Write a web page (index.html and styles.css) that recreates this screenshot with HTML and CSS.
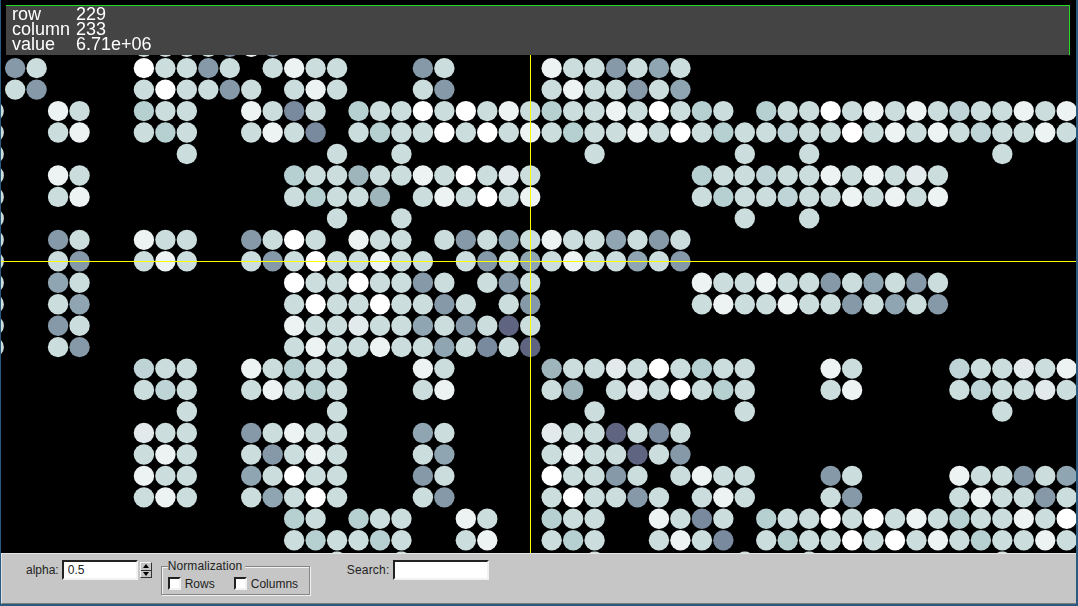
FILE: index.html
```html
<!DOCTYPE html>
<html lang="en">
<head>
    <meta charset="UTF-8">
    <meta name="viewport" content="width=device-width, initial-scale=1.0">
    <title>Matrix Viewer</title>
    <link rel="stylesheet" href="styles.css">
</head>
<body>
    <div class="window">
        <div class="view">
            <canvas id="matrix" width="1075" height="553"></canvas>
            <div class="cross-v"></div>
            <div class="cross-h"></div>
            <div class="info">
                <span>row</span><span>229</span>
                <span>column</span><span>233</span>
                <span>value</span><span>6.71e+06</span>
            </div>
        </div>
        <div class="panel">
            <label class="field-label alpha-label" for="alpha">alpha:</label>
            <input class="entry alpha-entry" type="text" id="alpha" value="0.5">
            <div class="spin">
                <button class="spin-btn"><span class="arrow-up"></span></button>
                <button class="spin-btn"><span class="arrow-down"></span></button>
            </div>
            <fieldset class="group">
                <legend>Normalization</legend>
                <label class="check check-rows"><input type="checkbox">Rows</label>
                <label class="check"><input type="checkbox">Columns</label>
            </fieldset>
            <label class="field-label search-label" for="search">Search:</label>
            <input class="entry search-entry" type="text" id="search">
        </div>
    </div>
    <script src="app.js"></script>
</body>
</html>
```

FILE: styles.css
```css
body {
    margin: 0;
    background-color: #2b5a80;
    font-family: "Liberation Sans", Arial, sans-serif;
}
.window {
    width: 1075px;
    height: 604px;
    margin-left: 1px;
    display: flex;
    flex-direction: column;
    overflow: hidden;
}
.view {
    position: relative;
    height: 553px;
    background-color: #000;
}
#matrix {
    display: block;
}
.cross-v {
    position: absolute;
    left: 529px;
    top: 55px;
    bottom: 0;
    width: 1px;
    background-color: #ffff00;
}
.cross-h {
    position: absolute;
    left: 0;
    right: 0;
    top: 261px;
    height: 1px;
    background-color: #ffff00;
}
.info {
    position: absolute;
    left: 5px;
    top: 5px;
    width: 1057px;
    height: 48px;
    padding: 1px 0 0 6px;
    display: grid;
    grid-template-columns: 64px 1fr;
    grid-auto-rows: 15px;
    background-color: #444;
    border-top: 1px solid #22dd22;
    border-right: 1px solid #22dd22;
    color: #fff;
    font-size: 18px;
    line-height: 15px;
}
.panel {
    flex: 1;
    display: flex;
    align-items: flex-start;
    padding: 6px 0 0 24px;
    background-color: #c6c6c6;
    border-top: 1px solid #e4e4e4;
    border-left: 1px solid #e4e4e4;
    border-bottom: 1px solid #7d7d7d;
    font-size: 12px;
    color: #222;
}
.field-label {
    line-height: 20px;
    margin-right: 3px;
}
.entry {
    height: 20px;
    padding: 0 0 0 4px;
    box-sizing: border-box;
    margin: 0;
    background-color: #fff;
    border: 2px solid;
    border-color: #222 #f2f2f2 #f2f2f2 #222;
    outline: none;
    font-family: "Liberation Sans", Arial, sans-serif;
    font-size: 12px;
    color: #222;
}
.alpha-entry {
    width: 76px;
}
.search-entry {
    width: 96px;
}
.search-label {
    margin-left: 37px;
    margin-right: 4px;
    letter-spacing: 0.2px;
}
.spin {
    width: 12px;
    height: 16px;
    box-sizing: border-box;
    margin: 2px 0 0 2px;
    display: flex;
    flex-direction: column;
    background-color: #c6c6c6;
    border: 1px solid;
    border-color: #f2f2f2 #333 #333 #f2f2f2;
}
.spin-btn {
    flex: 1;
    padding: 0;
    display: flex;
    align-items: center;
    justify-content: center;
    background: none;
    border: none;
}
.spin-btn:first-child {
    border-bottom: 1px solid #333;
}
.arrow-up {
    border-left: 3px solid transparent;
    border-right: 3px solid transparent;
    border-bottom: 4px solid #000;
}
.arrow-down {
    border-left: 3px solid transparent;
    border-right: 3px solid transparent;
    border-top: 4px solid #000;
}
.group {
    width: 149px;
    height: 35px;
    box-sizing: border-box;
    margin: 0 0 0 9px;
    padding: 0 0 0 6px;
    display: flex;
    align-items: center;
    border: 1px solid #858585;
    box-shadow: 1px 1px 0 #f2f2f2, inset 1px 1px 0 #f2f2f2;
}
.group legend {
    padding: 0 3px 0 0;
    line-height: 13px;
    letter-spacing: 0.1px;
    background-color: #c6c6c6;
}
.check {
    display: flex;
    align-items: center;
    line-height: 14px;
}
.check-rows {
    margin-right: 19px;
}
.check input {
    appearance: none;
    width: 13px;
    height: 13px;
    margin: 0 4px 0 0;
    box-sizing: border-box;
    background-color: #fff;
    border: 2px solid;
    border-color: #222 #f2f2f2 #f2f2f2 #222;
}
```

FILE: app.js
```js
// colour levels of the matrix cells
const colours = {
    w: '#ffffff',
    e: '#edf3f3',
    f: '#e2eaec',
    l: '#ccdddd',
    g: '#bfd4d7',
    b: '#b6cfd0',
    h: '#9db5bb',
    n: '#8fa6b2',
    m: '#8599a9',
    d: '#798a9e',
    p: '#5f6480'
};

// [first column, cells, first column, cells, ...], '.' is an empty cell
const rows = [
    [7, 'lllldem'],
    [1, 'ml', 7, 'wllml', 13, 'lell', 20, 'ml', 26, 'ellmlnl'],
    [1, 'lm', 7, 'lwllml', 14, 'lel', 20, 'lm', 26, 'lellmln'],
    [0, 'l', 3, 'el', 7, 'bll', 12, 'eldl', 17, 'bllwlwlelbllelwlbl', 36, 'bllwlelelgllele'],
    [0, 'l', 3, 'le', 7, 'lbl', 12, 'leld', 17, 'lbllwlwlelbllelwlbllgllwlelelgllel'],
    [0, 'l', 9, 'l', 16, 'l', 19, 'l', 28, 'l', 35, 'l', 38, 'l', 47, 'l'],
    [0, 'l', 3, 'el', 14, 'bllhllelwlfl', 33, 'bllgllelelfl'],
    [0, 'l', 3, 'le', 14, 'lbllh.lelwle', 33, 'lbllgllelele'],
    [0, 'l', 16, 'l', 19, 'l', 35, 'l', 38, 'l'],
    [0, 'l', 3, 'ml', 7, 'ell', 12, 'mlwl', 17, 'ell.lmlnlellnlml'],
    [0, 'l', 3, 'lm', 7, 'lel', 12, 'lmlwll', 18, 'ell.lmlnlellnlm'],
    [0, 'l', 3, 'nl', 14, 'wllwllml.lml', 33, 'ellellmlnlml'],
    [0, 'l', 3, 'ln', 14, 'lwllwllml.lm', 33, 'lellellmlnlm'],
    [0, 'l', 3, 'ml', 14, 'ellfllnlmlpl'],
    [0, 'l', 3, 'lm', 14, 'lellellnldlp'],
    [7, 'gll', 12, 'elbll', 20, 'el', 26, 'hllflwlbll', 39, 'el', 45, 'gllfle'],
    [7, 'lgl', 12, 'lelbl', 20, 'le', 26, 'lh.lflwlbl', 39, 'le', 45, 'lgllfl'],
    [9, 'l', 16, 'l', 28, 'l', 35, 'l', 47, 'l'],
    [7, 'fll', 12, 'mlell', 20, 'nl', 26, 'fllpldl'],
    [7, 'lel', 12, 'lmlel', 20, 'ln', 26, 'lellplm'],
    [7, 'ell', 12, 'nlwll', 20, 'ml', 26, 'wllml.lell', 39, 'ml', 45, 'ellmln'],
    [7, 'lel', 12, 'lnlwl', 20, 'lm', 26, 'lwllml.lel', 39, 'lm', 45, 'lellml'],
    [14, 'bl.bll', 22, 'el', 26, 'bll', 31, 'eldl.bllwlwlelbllelw'],
    [14, 'lbllbl', 22, 'le', 26, 'lbl', 31, 'leld.lbllwlwlelbllel'],
    [16, 'l', 19, 'l', 28, 'l', 35, 'l', 38, 'l', 47, 'l']
];

const PITCH = 21.46;
const RADIUS = 10.2;
const ctx = document.getElementById('matrix').getContext('2d');

// first row is almost hidden behind the info bar
rows.forEach((row, r) => {
    const y = 46.7 + PITCH * r;
    for (let i = 0; i < row.length; i += 2) {
        [...row[i + 1]].forEach((level, k) => {
            if (level === '.') return;
            const x = -7.3 + PITCH * (row[i] + k);
            ctx.fillStyle = colours[level];
            ctx.beginPath();
            ctx.arc(x, y, RADIUS, 0, Math.PI * 2);
            ctx.fill();
        });
    }
});
```
